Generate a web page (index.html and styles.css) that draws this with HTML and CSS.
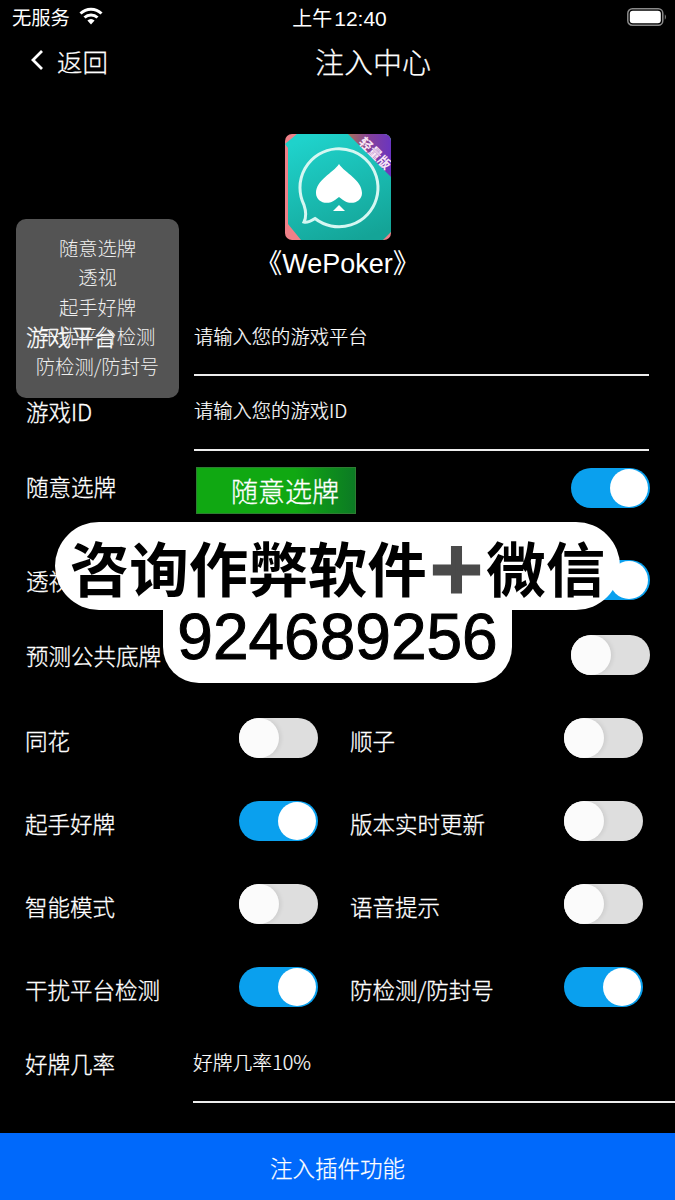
FILE: index.html
```html
<!DOCTYPE html>
<html lang="zh-CN">
<head>
<meta charset="utf-8">
<title>注入中心</title>
<link rel="stylesheet" href="styles.css">
</head>
<body>
<div class="page">
  <div class="status">
    <div class="status-left">
      <span>无服务</span>
      <svg class="wifi" viewBox="0 0 24 18" width="24" height="18"><path d="M1.5 6.5a15 15 0 0 1 21 0" fill="none" stroke="#fff" stroke-width="3"/><path d="M5.5 10.5a9.5 9.5 0 0 1 13 0" fill="none" stroke="#fff" stroke-width="3"/><path d="M12 17.5l-3.6-4a5 5 0 0 1 7.2 0z" fill="#fff"/></svg>
    </div>
    <div class="status-time">上午<span class="status-digits">12:40</span></div>
    <div class="status-right">
      <svg viewBox="0 0 40 18" width="40" height="18"><rect x="0.8" y="0.8" width="35" height="16.4" rx="4.5" fill="none" stroke="#8a8a8a" stroke-width="1.5"/><rect x="2.8" y="2.8" width="31" height="12.4" rx="3" fill="#fff"/><path d="M37.8 6.5c1.4.4 1.4 4.6 0 5z" fill="#8a8a8a"/></svg>
    </div>
  </div>

  <div class="nav">
    <div class="back">
      <svg class="chevron" viewBox="0 0 14 22" width="14" height="22"><path d="M12 2L3 11l9 9" fill="none" stroke="#fff" stroke-width="2.8"/></svg>
      <span>返回</span>
    </div>
    <div class="nav-title">注入中心</div>
  </div>

  <div class="app">
    <svg class="app-logo" viewBox="0 0 106 106" width="106" height="106">
      <defs>
        <linearGradient id="teal" x1="0.3" y1="0" x2="0.7" y2="1"><stop offset="0" stop-color="#1fd2cb"/><stop offset="1" stop-color="#14a497"/></linearGradient>
        <linearGradient id="rib" x1="0" y1="0" x2="1" y2="0"><stop offset="0" stop-color="#a8705a"/><stop offset="0.5" stop-color="#84409a"/><stop offset="1" stop-color="#6a35c0"/></linearGradient>
        <clipPath id="round"><rect width="106" height="106" rx="7"/></clipPath>
      </defs>
      <g clip-path="url(#round)">
        <rect width="106" height="106" fill="#ee8088"/>
        <path d="M12 0H106V98L98 106H16L3 90V14L0 10z" fill="url(#teal)"/>
        <path d="M63 0H106V43z" fill="url(#rib)"/>
        <text class="ribbon-text" transform="translate(86.8 22.7) rotate(45)" text-anchor="middle">轻量版</text>
      </g>
      <path d="M19 71A39 39 0 1 1 30 84.5C26 87 22 89 19 88C21 84 21 77 19 71z" fill="none" stroke="#d5f7f2" stroke-width="3"/>
      <path d="M54 30c6 9 23 16 23 29 0 9-11 13-19 7l-4-3-4 3c-8 6-19 2-19-7 0-13 17-20 23-29z" fill="#fff"/>
      <path d="M54 71l6 6H48z" fill="#fff"/>
    </svg>
    <div class="app-name">《WePoker》</div>
  </div>

  <div class="field field-platform">
    <span class="label">游戏平台</span>
    <div class="input">请输入您的游戏平台</div>
  </div>
  <div class="field field-id">
    <span class="label">游戏ID</span>
    <div class="input">请输入您的游戏ID</div>
  </div>

  <div class="row row-random">
    <span class="label">随意选牌</span>
    <div class="green-btn"><span>随意选牌</span></div>
    <span class="toggle on"></span>
  </div>
  <div class="row row-see">
    <span class="label">透视</span>
    <span class="toggle on"></span>
  </div>
  <div class="row row-predict">
    <span class="label">预测公共底牌</span>
    <span class="toggle"></span>
  </div>

  <div class="pairs">
    <div class="pair"><span class="label">同花</span><span class="toggle"></span></div>
    <div class="pair"><span class="label">顺子</span><span class="toggle"></span></div>
    <div class="pair"><span class="label">起手好牌</span><span class="toggle on"></span></div>
    <div class="pair"><span class="label">版本实时更新</span><span class="toggle"></span></div>
    <div class="pair"><span class="label">智能模式</span><span class="toggle"></span></div>
    <div class="pair"><span class="label">语音提示</span><span class="toggle"></span></div>
    <div class="pair"><span class="label">干扰平台检测</span><span class="toggle on"></span></div>
    <div class="pair"><span class="label">防检测/防封号</span><span class="toggle on"></span></div>
  </div>

  <div class="field field-rate">
    <span class="label">好牌几率</span>
    <div class="input">好牌几率10%</div>
  </div>

  <div class="submit">注入插件功能</div>

  <div class="tip">
    <div>随意选牌</div>
    <div>透视</div>
    <div>起手好牌</div>
    <div>干扰平台检测</div>
    <div>防检测/防封号</div>
  </div>

  <div class="promo">
    <div class="promo-top">咨询作弊软件<span class="plus">＋</span>微信</div>
    <div class="promo-num">924689256</div>
  </div>
</div>
</body>
</html>
```
FILE: styles.css
```css
* { box-sizing: border-box; }
html, body { margin: 0; padding: 0; background: #000; }
body { font-family: "Noto Sans CJK SC", "Noto Sans", sans-serif; color: #fff; }
.page { position: relative; width: 675px; height: 1200px; overflow: hidden; display: flex; flex-direction: column; background: #000; }

.status { height: 34px; display: grid; grid-template-columns: 1fr auto 1fr; align-items: center; padding: 0 8px 0 12px; font-size: 19.3px; }
.status-left { display: flex; align-items: center; gap: 9px; }
.wifi { margin-top: -3px; }
.status-time { font-size: 20px; }
.status-digits { font-family: "Liberation Sans", sans-serif; font-size: 21px; margin-left: 2px; }
.status-right { display: flex; justify-content: flex-end; }

.nav { height: 56px; display: grid; grid-template-columns: 285px auto; align-items: center; padding-left: 30px; }
.back { display: flex; align-items: center; gap: 13px; font-size: 25.5px; font-weight: 300; margin-top: -3px; -webkit-text-stroke: .25px #fff; }
.chevron { margin-top: -2px; }
.nav-title { font-size: 29px; font-weight: 300; margin-top: -3px; -webkit-text-stroke: .25px #fff; }

.app { height: 211px; padding-top: 44px; display: flex; flex-direction: column; align-items: center; }
.app-logo { display: block; flex: none; }
.ribbon-text { font-size: 13px; font-weight: 700; fill: #f8e6f6; font-family: "Noto Sans CJK SC", sans-serif; }
.app-name { font-family: "Liberation Sans", "Noto Sans CJK SC", sans-serif; font-size: 27px; line-height: 36px; margin-top: 6px; }

.label { font-size: 22.5px; font-weight: 300; line-height: 30px; white-space: nowrap; -webkit-text-stroke: .3px #fff; }
.field { display: grid; grid-template-columns: 168px 1fr; padding: 0 26px; }
.input { font-size: 19.3px; font-weight: 300; line-height: 28px; border-bottom: 2px solid #ededed; -webkit-text-stroke: .2px #fff; }
.field-platform, .field-id { height: 75px; }
.field-platform .label { padding-top: 20px; }
.field-platform .input { padding-top: 21px; }
.field-id .label { padding-top: 20px; }
.field-id .input { padding-top: 20px; }

.row { display: flex; align-items: center; padding: 0 25px 0 26px; height: 75px; }
.row .toggle { margin-left: auto; }
.row-random { margin-top: -1px; }
.row-random .label { margin-top: -3px; }
.green-btn { width: 160px; height: 47px; margin: 6px 0 0 80px; padding-left: 34px; display: flex; align-items: center; font-size: 27px; font-weight: 300; background: linear-gradient(90deg, #10a812 0%, #10a812 62%, #0c7a24 100%); border: 1px solid #2e7d32; -webkit-text-stroke: .3px #fff; }
.row-see { margin-top: 17px; }

.toggle { flex: none; width: 79px; height: 40px; border-radius: 20px; background: #dedede; position: relative; display: block; }
.toggle::after { content: ""; position: absolute; left: 0; top: 0; width: 40px; height: 40px; border-radius: 50%; background: #fbfbfb; box-shadow: 2px 0 4px rgba(0,0,0,.08); }
.toggle.on { background: #0aa0ee; }
.toggle.on::after { left: auto; right: 2px; top: 1px; width: 38px; height: 38px; background: #fff; box-shadow: none; }

.pairs { display: grid; grid-template-columns: 325px 325px; grid-auto-rows: 83px; margin-top: 4px; padding-left: 25px; height: 332px; }
.pair { display: flex; align-items: center; justify-content: space-between; padding-right: 32px; }
.pair .label { margin-top: 4px; }

.field-rate { padding: 0 0 0 25px; height: 73px; margin-top: 2px; }
.field-rate .label { padding-top: 18px; }
.field-rate .input { font-size: 19.8px; padding-top: 18px; height: 73px; }

.submit { margin-top: auto; height: 67px; flex: none; display: flex; align-items: center; justify-content: center; background: #0069fb; font-size: 22.5px; font-weight: 300; -webkit-text-stroke: .25px #fff; }

.tip { position: absolute; left: 16px; top: 219px; width: 163px; height: 179px; border-radius: 10px; background: rgba(255,255,255,.33); padding-top: 15px; text-align: center; font-size: 19.3px; font-weight: 300; line-height: 29.4px; color: #f0f0f0; }

.promo { position: absolute; left: 55px; top: 522px; width: 565px; display: flex; flex-direction: column; align-items: center; color: #000; }
.promo-top { width: 565px; height: 88px; border-radius: 44px; background: #fff; font-size: 59.5px; font-weight: 700; line-height: 88px; text-align: center; white-space: nowrap; }
.plus { color: #4a4a4a; -webkit-text-stroke: 5px #4a4a4a; }
.promo-num { width: 349px; height: 73px; border-radius: 0 0 36px 36px; background: #fff; font-family: "Liberation Sans", sans-serif; font-size: 64px; line-height: 54px; text-align: center; -webkit-text-stroke: 1px #000; }
```
